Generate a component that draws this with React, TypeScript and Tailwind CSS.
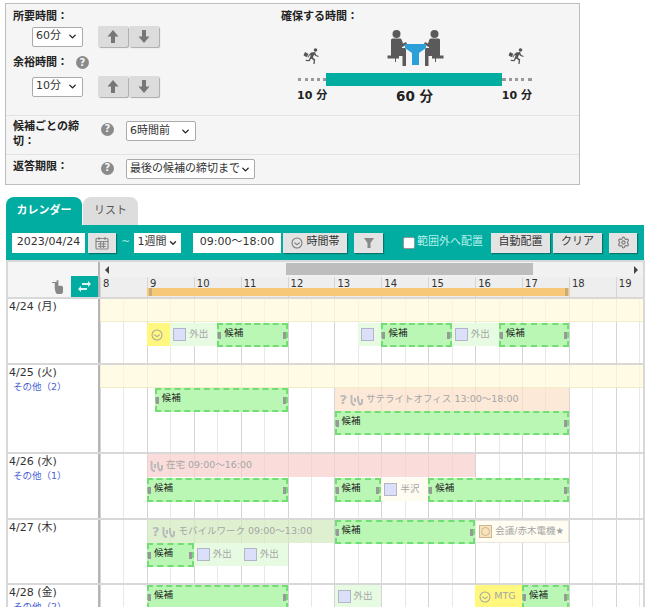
import type { ReactNode } from 'react';
import { ChevronDown, Settings } from 'lucide-react';

const HOUR = 46.9;
const START = 8;
const hours = [8, 9, 10, 11, 12, 13, 14, 15, 16, 17, 18, 19];

// 時刻 → タイムライン上のpx
const px = (h: number) => (h - START) * HOUR;

function Help() {
  return (
    <span className="inline-flex h-[13px] w-[13px] items-center justify-center rounded-full bg-[#8a8a8a] text-[10px] leading-none font-bold text-[#f5f5f5]">
      ?
    </span>
  );
}

function Select({ label, width }: { label: string; width: string }) {
  return (
    <div className={`flex h-[20px] items-center justify-between rounded-[2px] border border-[#aaa] bg-white pr-1 pl-[3px] text-[11px] font-normal text-[#333] ${width}`}>
      <span className="whitespace-nowrap">{label}</span>
      <ChevronDown size={11} strokeWidth={3} className="shrink-0 text-[#222]" />
    </div>
  );
}

function ArrowPair() {
  return (
    <div className="flex gap-[1px]">
      <div className="flex h-[21px] w-[30px] items-center justify-center rounded-[2px] bg-[#dcdcdc] shadow-[1px_1px_1px_#aaa]">
        <svg width="12" height="13" viewBox="0 0 12 13" fill="#777"><path d="M6 0l5.500 6.500H8V13H4V6.500H.5z" /></svg>
      </div>
      <div className="flex h-[21px] w-[30px] items-center justify-center rounded-[2px] bg-[#dcdcdc] shadow-[1px_1px_1px_#aaa]">
        <svg width="12" height="13" viewBox="0 0 12 13" fill="#777"><path d="M6 13L.5 6.500H4V0h4v6.500h3.500z" /></svg>
      </div>
    </div>
  );
}

function Runner() {
  return (
    <svg width="17" height="18" viewBox="0 0 17 17" fill="#555" className="mb-[1px] shrink-0">
      <circle cx="12.500" cy="2.500" r="1.800" />
      <path d="M8 5l4-.5 1.200 3 2.500 1-.4 1-3.200-1.200-.9-1.300-1.400 3 2.400 2-.6 4.500h-1.200l.3-3.800-2.600-1.600-1.600 2.600-3.800-.3.1-1.100 3 .1 2-4.600-1.400.1-1.200 2-1-.5z" />
      <path d="M2 4.500l3.500 2-2 3.200-3-2z" />
    </svg>
  );
}

function Meeting() {
  const person = 'M3 10c0-1 1-1.500 2-1.500h7c1 0 1.500.5 2 2l1 3 3-1.500 1 2-4.500 3H14v1h2.500c1 0 1.500.5 1.500 1.500V36h-3.500V26H11v2.500H8v3.500h-1v-3.500H-.5v-3H3z';
  return (
    <svg width="55" height="36" viewBox="0 0 55 36" className="shrink-0 overflow-visible">
      <g fill="#5a5a5a">
        <circle cx="8.500" cy="4" r="4" />
        <path d={person} />
        <g transform="translate(55 0) scale(-1 1)">
          <circle cx="8.500" cy="4" r="4" />
          <path d={person} />
        </g>
      </g>
      <path d="M17 14h21v4l-7 5v12h-7V23l-7-5z" fill="#2c9fd8" />
    </svg>
  );
}

function ClockFace({ color = '#a5a5a5', size = 12 }: { color?: string; size?: number }) {
  return (
    <svg width={size} height={size} viewBox="0 0 14 14" fill="none" stroke={color} strokeWidth="1.200" className="shrink-0">
      <circle cx="7" cy="7" r="5.800" />
      <path d="M3.800 6.500L7 9l3.200-2.500" />
    </svg>
  );
}

function Remote() {
  return (
    <svg width="13" height="12" viewBox="0 0 13 12" fill="none" stroke="#bbb" strokeWidth="2" className="shrink-0">
      <path d="M1.500 1v6c0 2.500 1.500 4 3.500 4M5 8V4M8 2c0 3-.5 6 2 8.500 1.500 0 2-1.500 2-3V5" />
    </svg>
  );
}

type Ev = { from: number; to: number; top: number; kind: string; label?: string };

function Candidate({ from, to, top }: Ev) {
  return (
    <div
      className="absolute flex h-[24px] items-center justify-between border-2 border-dashed border-[#72dd72] bg-[#baf7b5] text-[9.5px] text-[#222]"
      style={{ left: px(from), width: px(to) - px(from), top }}
    >
      <span className="flex items-center gap-[3px]">
        <span className="-ml-[1px] h-[7px] w-[3px] shrink-0 bg-[#999]" />
        <span className="pb-[3px]">候補</span>
      </span>
      <span className="h-[7px] w-[3px] shrink-0 bg-[#999]" />
    </div>
  );
}

function Plain({ from, to, top, kind, label }: Ev) {
  const bg: Record<string, string> = {
    out: 'bg-[#e6fbe2]',
    cream: 'bg-[#fffdf2]',
    meet: 'bg-[#fffdf2] border border-[#e8e8e0]',
    yellow: 'bg-[#fff77e]',
    hope: 'bg-[#fbdfc8]/70',
    home: 'bg-[#f8cfca]/70',
    mobile: 'bg-[#d2eabc]/70',
  };
  const wide = kind === 'hope' || kind === 'home' || kind === 'mobile';
  return (
    <div
      className={`absolute flex h-[23px] items-center gap-[3px] pl-[3px] text-[9.5px] whitespace-nowrap text-[#a5a5a5] ${bg[kind]}`}
      style={{ left: px(from), width: px(to) - px(from), top }}
    >
      {(kind === 'out' || kind === 'cream') && (
        <span className="h-[13px] w-[13px] shrink-0 border border-[#b5b5c8] bg-[#dcdffa]" />
      )}
      {kind === 'meet' && (
        <span className="flex h-[13px] w-[13px] shrink-0 items-center justify-center border border-[#c8b89a] bg-[#fbe3b8]">
          <span className="h-[9px] w-[9px] rounded-full border border-[#c8b89a]" />
        </span>
      )}
      {kind === 'yellow' && <span className="pl-[1px]"><ClockFace /></span>}
      {kind === 'hope' || kind === 'mobile' ? <span className="ml-[2px] text-[13px] leading-none font-bold text-[#bbb]">?</span> : null}
      {wide && <Remote />}
      {label && <span>{label}</span>}
    </div>
  );
}

function TimeGrid() {
  return (
    <div className="absolute inset-0 flex">
      {hours.map((h) => (
        <div key={h} className="flex shrink-0 border-l border-[#d5d5d5]" style={{ width: HOUR }}>
          <div className="flex-1 border-r border-[#e8e8e8]" />
          <div className="flex-1" />
        </div>
      ))}
    </div>
  );
}

type Row = { date: string; other?: string; height: number; band?: boolean; events: Ev[] };

const C = 'cand';
const rows: Row[] = [
  {
    date: '4/24 (月)',
    height: 66,
    band: true,
    events: [
      { from: 9, to: 9.5, top: 24, kind: 'yellow' },
      { from: 9.5, to: 10.5, top: 24, kind: 'out', label: '外出' },
      { from: 10.5, to: 12, top: 24, kind: C },
      { from: 13.5, to: 14, top: 24, kind: 'out' },
      { from: 14, to: 15.5, top: 24, kind: C },
      { from: 15.5, to: 16.5, top: 24, kind: 'out', label: '外出' },
      { from: 16.5, to: 18, top: 24, kind: C },
    ],
  },
  {
    date: '4/25 (火)',
    other: 'その他（2）',
    height: 89,
    band: true,
    events: [
      { from: 9.17, to: 12, top: 23, kind: C },
      { from: 13, to: 18, top: 23, kind: 'hope', label: 'サテライトオフィス 13:00～18:00' },
      { from: 13, to: 18, top: 46, kind: C },
    ],
  },
  {
    date: '4/26 (水)',
    other: 'その他（1）',
    height: 66,
    events: [
      { from: 9, to: 16, top: 0, kind: 'home', label: '在宅 09:00～16:00' },
      { from: 9, to: 12, top: 24, kind: C },
      { from: 13, to: 14, top: 24, kind: C },
      { from: 14, to: 15, top: 24, kind: 'cream', label: '半沢' },
      { from: 15, to: 18, top: 24, kind: C },
    ],
  },
  {
    date: '4/27 (木)',
    height: 65,
    events: [
      { from: 9, to: 13, top: 0, kind: 'mobile', label: 'モバイルワーク 09:00～13:00' },
      { from: 13, to: 16, top: 0, kind: C },
      { from: 16, to: 18, top: 0, kind: 'meet', label: '会議/赤木電機★' },
      { from: 9, to: 10, top: 23, kind: C },
      { from: 10, to: 11, top: 23, kind: 'out', label: '外出' },
      { from: 11, to: 12, top: 23, kind: 'out', label: '外出' },
    ],
  },
  {
    date: '4/28 (金)',
    other: 'その他（2）',
    height: 66,
    events: [
      { from: 9, to: 12, top: 0, kind: C },
      { from: 13, to: 14, top: 0, kind: 'out', label: '外出' },
      { from: 16, to: 17, top: 0, kind: 'yellow', label: 'MTG' },
      { from: 17, to: 18, top: 0, kind: C },
    ],
  },
];

function ToolButton({ children, className = '' }: { children: ReactNode; className?: string }) {
  return (
    <div className={`flex h-[20px] shrink-0 items-center justify-center gap-1 bg-[#e3e3e3] text-[11px] text-[#333] shadow-[1px_1px_1px_#00766d] ${className}`}>
      {children}
    </div>
  );
}

export default function App() {
  return (
    <div
      className="h-[607px] w-[650px] overflow-hidden bg-white pt-[3px] pl-[5px] text-[#222]"
      style={{ fontFamily: '"DejaVu Sans", "Noto Sans CJK JP", sans-serif' }}
    >
      {/* 設定パネル */}
      <div className="h-[182px] w-[575px] border border-[#bdbdbd] bg-[#f5f5f5] text-[11px]">
        <div className="flex h-[111px]">
          <div className="w-[275px] pt-[4px] pl-[7px] font-bold">
            <div className="leading-[17px]">所要時間：</div>
            <div className="mt-[1px] flex items-center gap-[15px] pl-[19px]">
              <Select label="60分" width="w-[51px]" />
              <ArrowPair />
            </div>
            <div className="mt-[7px] flex items-center gap-[8px] leading-[17px]">
              余裕時間：<Help />
            </div>
            <div className="mt-[5px] flex items-center gap-[15px] pl-[19px]">
              <Select label="10分" width="w-[51px]" />
              <ArrowPair />
            </div>
          </div>
          <div className="pt-[4px] font-bold">
            <div className="leading-[17px]">確保する時間：</div>
            <div className="ml-[16px] w-[235px]">
              <div className="flex h-[41px] items-end pt-[5px]">
                <div className="ml-[6px] flex items-end"><Runner /></div>
                <div className="ml-[68px]"><Meeting /></div>
                <div className="ml-[65px] flex items-end"><Runner /></div>
              </div>
              <div className="mt-[7px] ml-[1px] flex h-[13px] items-center">
                <span className="w-[28px] border-t-[3px] border-dotted border-[#999]" />
                <span className="h-[13px] w-[176px] bg-[#00ada0]" />
                <span className="w-[30px] border-t-[3px] border-dotted border-[#999]" />
              </div>
              <div className="flex items-center justify-between">
                <span className="w-[40px] text-[11px]">10 分</span>
                <span className="text-[13.5px]">60 分</span>
                <span className="w-[40px] text-right text-[11px]">10 分</span>
              </div>
            </div>
          </div>
        </div>
        <div className="flex h-[39px] border-t border-[#e3e3e3] pt-[5px] pl-[7px] font-bold">
          <div className="-mt-[2px] mr-[18px] w-[70px] leading-[15px]">候補ごとの締切：</div>
          <div className="w-[25px]"><Help /></div>
          <Select label="6時間前" width="w-[70px]" />
        </div>
        <div className="flex h-[29px] border-t border-[#e3e3e3] pt-[4px] pl-[7px] font-bold">
          <div className="w-[88px] leading-[15px]">返答期限：</div>
          <div className="w-[25px] pt-[1px]"><Help /></div>
          <Select label="最後の候補の締切まで" width="w-[129px]" />
        </div>
      </div>

      {/* タブ */}
      <div className="mt-[12px] ml-[1px] flex h-[28px] items-end gap-[1px] text-[11px]">
        <div className="flex h-[28px] w-[76px] items-center justify-center rounded-t-[8px] bg-[#00ada0] font-bold text-white">カレンダー</div>
        <div className="flex h-[28px] w-[55px] items-center justify-center rounded-t-[8px] bg-[#dddddd] text-[#555]">リスト</div>
      </div>

      {/* ツールバー */}
      <div className="ml-[1px] flex h-[35px] w-[638px] items-center bg-[#00ada0] pl-[6px] text-[11px]">
        <div className="flex h-[20px] w-[73px] shrink-0 items-center justify-center bg-white text-[#333]">2023/04/24</div>
        <ToolButton className="ml-[3px] w-[28px]">
          <svg width="14" height="14" viewBox="0 0 14 14" fill="none" stroke="#888" strokeWidth="1.200">
            <rect x="1" y="2.500" width="12" height="10.500" rx="1" />
            <path d="M1 5.500h12M4 1v3M10 1v3M3 8h8M3 10.500h8M5.500 6v6M8.500 6v6" />
          </svg>
        </ToolButton>
        <span className="ml-[5px] w-[9px] shrink-0 text-[#a5e6e0]">~</span>
        <div className="ml-[4px] flex h-[20px] w-[47px] shrink-0 items-center justify-center gap-[1px] bg-white text-[#333]">
          1週間<ChevronDown size={10} strokeWidth={3.5} />
        </div>
        <div className="ml-[12px] flex h-[20px] w-[88px] shrink-0 items-center justify-center bg-white whitespace-nowrap text-[#333]">09:00～18:00</div>
        <ToolButton className="ml-[2px] w-[64px]">
          <ClockFace color="#777" />時間帯
        </ToolButton>
        <ToolButton className="ml-[7px] w-[29px]">
          <svg width="12" height="12" viewBox="0 0 12 12" fill="#888"><path d="M1 1h10L7.500 6v5h-3V6z" /></svg>
        </ToolButton>
        <span className="ml-[20px] h-[12px] w-[12px] shrink-0 rounded-[2px] border border-[#999] bg-white" />
        <span className="ml-[2px] w-[66px] shrink-0 whitespace-nowrap text-[#b5f1ec]">範囲外へ配置</span>
        <ToolButton className="ml-[8px] w-[59px]">自動配置</ToolButton>
        <ToolButton className="ml-[3px] w-[49px]">クリア</ToolButton>
        <ToolButton className="ml-[7px] w-[28px]">
          <Settings size={13} className="text-[#777]" />
        </ToolButton>
      </div>

      {/* カレンダー */}
      <div className="ml-[1px] w-[639px] border-r-2 border-l-2 border-[#d8d8d8] text-[11px]">
        {/* ヘッダ */}
        <div className="flex h-[39px] border-t-2 border-b-2 border-[#d8d8d8]">
          <div className="flex w-[92px] shrink-0 items-end justify-end gap-[8px] border-r-2 border-[#b5b5b5] bg-[#f5f5f5]">
            <svg width="11" height="14" viewBox="0 0 12 15" fill="#888" className="mb-[3px]">
              <path d="M0 2h5V0h2v6h3c1.500 0 2 1 2 2v5c0 1-1 2-2 2H6c-1 0-1.500-.5-2-1.500L3 9V3H0z" />
            </svg>
            <div className="flex h-[21px] w-[27px] items-center justify-center bg-[#00ada0]">
              <svg width="13" height="11" viewBox="0 0 13 11" fill="#dff5f3">
                <path d="M4 2h6V0l3 3-3 3V4H4zM9 7H3V5L0 8l3 3V9h6z" />
              </svg>
            </div>
          </div>
          <div className="min-w-0 flex-1">
            <div className="relative flex h-[15px] items-center justify-between bg-[#f1f1f1] px-[5px]">
              <span className="h-0 w-0 border-y-[4px] border-r-[4px] border-y-transparent border-r-[#444]" />
              <div className="absolute top-[1px] left-[186px] h-[12px] w-[247px] bg-[#bdbdbd]" />
              <span className="h-0 w-0 border-y-[4px] border-l-[4px] border-y-transparent border-l-[#444]" />
            </div>
            <div className="relative flex h-[20px] overflow-hidden bg-[#eeeeee]">
              {hours.map((h) => (
                <div key={h} className="shrink-0 border-l border-[#d5d5d5] pl-[2px] text-[10px] leading-[14px] text-[#333]" style={{ width: HOUR }}>
                  {h}
                </div>
              ))}
              <div className="absolute bottom-[1px] flex h-[8px] justify-between bg-[#f7c878]" style={{ left: px(9), width: px(18) - px(9) }}>
                <span className="ml-[2px] h-full w-[3px] bg-[#c9ab7c]" />
                <span className="mr-[1px] h-full w-[3px] bg-[#c9ab7c]" />
              </div>
            </div>
          </div>
        </div>

        {rows.map((row) => (
          <div key={row.date} className="flex border-b-2 border-[#d8d8d8]" style={{ height: row.height }}>
            <div className="w-[92px] shrink-0 border-r-2 border-[#b5b5b5] bg-white pl-[1px] text-[11px] leading-[15px] text-[#333]">
              <div>{row.date}</div>
              {row.other && <div className="pl-[4px] text-[9.5px] leading-[13px] text-[#4a5fd8]">{row.other}</div>}
            </div>
            <div className="relative min-w-0 flex-1 overflow-hidden">
              <TimeGrid />
              {row.band && <div className="absolute inset-x-0 top-0 h-[23px] border-b border-[#f2ecc8] bg-[#fff9d8]/70" />}
              {row.events.map((ev, i) =>
                ev.kind === C ? <Candidate key={i} {...ev} /> : <Plain key={i} {...ev} />,
              )}
            </div>
          </div>
        ))}
      </div>
    </div>
  );
}
